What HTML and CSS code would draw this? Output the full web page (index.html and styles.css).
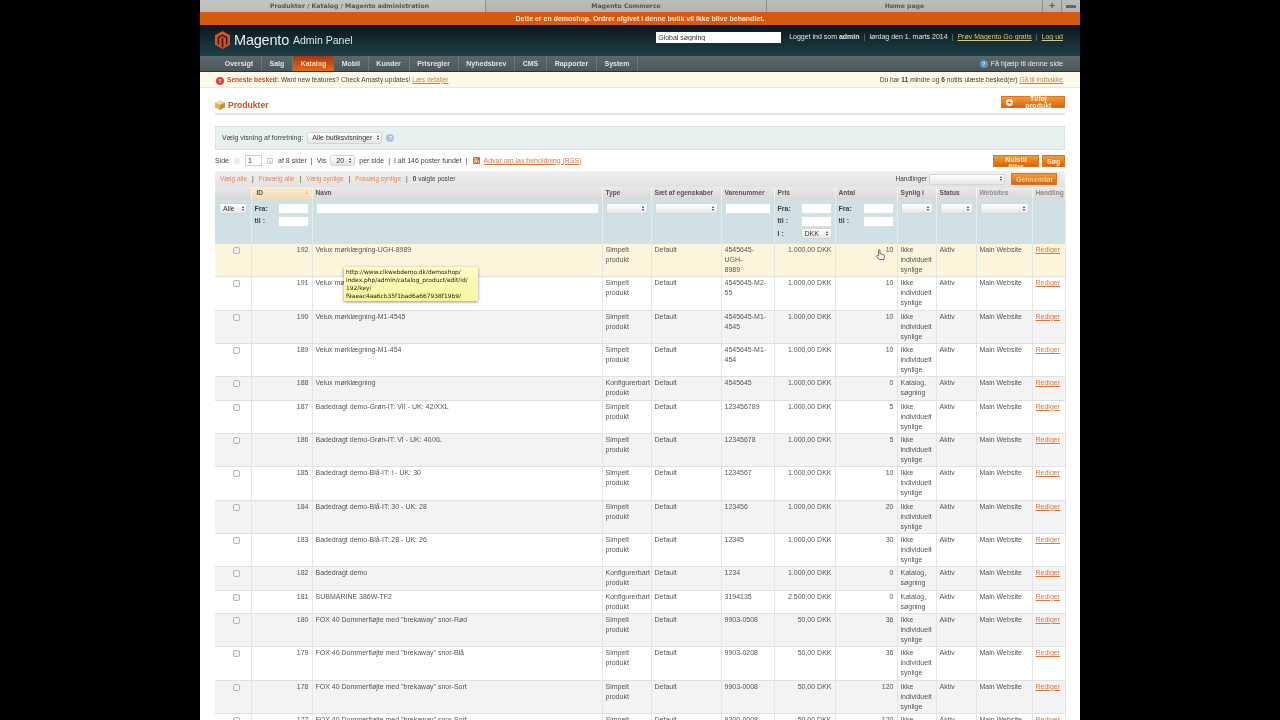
FILE: index.html
```html
<!DOCTYPE html>
<html lang="da">
<head>
  <meta charset="UTF-8" />
  <title>Produkter / Katalog / Magento administration</title>
  <link rel="stylesheet" href="styles.css">
</head>
<body>
<div class="page">
  <!-- Browser tabs -->
  <div class="tabs">
    <div class="tab tab-active tab-1">Produkter / Katalog / Magento administration</div>
    <div class="tab tab-2">Magento Commerce</div>
    <div class="tab tab-3">Home page</div>
    <div class="tab tab-plus">+</div>
    <div class="tab tab-list"><span class="tab-bars"></span></div>
  </div>

  <div class="demo-notice">Dette er en demoshop. Ordrer afgivet i denne butik vil ikke blive behandlet.</div>

  <header class="header">
    <div class="logo">
      <svg class="logo-icon" width="15" height="18" viewBox="0 0 15 18">
        <polygon points="7.5,0 15,4.3 15,13.7 7.5,18 0,13.7 0,4.3" fill="#d8531f"/>
        <polygon points="7.5,3.2 12.4,6 12.4,13 10.8,13.9 10.8,7 7.5,5.1 4.2,7 4.2,13.9 2.6,13 2.6,6" fill="#3a1a12"/>
        <polygon points="6.7,7 8.3,7 8.3,16 7.5,16.4 6.7,16" fill="#3a1a12"/>
      </svg>
      <span class="logo-name">Magento</span><span class="logo-sub">Admin Panel</span>
    </div>
    <div class="header-right">
      <input class="global-search" type="text" value="Global søgning">
      <div class="user-info">Logget ind som <b>admin</b><i>|</i>lørdag den 1. marts 2014<i>|</i><a class="go-link">Prøv Magento Go gratis</a><i>|</i><a class="go-link">Log ud</a></div>
    </div>
  </header>

  <nav class="nav">
    <ul class="nav-items">
      <li>Oversigt</li>
      <li>Salg</li>
      <li class="active">Katalog</li>
      <li>Mobil</li>
      <li>Kunder</li>
      <li>Prisregler</li>
      <li>Nyhedsbrev</li>
      <li>CMS</li>
      <li>Rapporter</li>
      <li>System</li>
    </ul>
    <div class="nav-help"><span class="help-dot">?</span>Få hjælp til denne side</div>
  </nav>

  <div class="notification">
    <div><span class="warn-dot">!</span><b class="warn-label">Seneste besked:</b> Want new features? Check Amasty updates! <a>Læs detaljer</a></div>
    <div>Du har <b>11</b> mindre og <b>6</b> notits ulæste besked(er) <a>Gå til indbakke</a></div>
  </div>

  <div class="content">
    <div class="content-head">
      <h3>
        <svg width="10" height="10" viewBox="0 0 10 10">
          <polygon points="5,0 10,2.4 5,4.8 0,2.4" fill="#f5dc9a"/>
          <polygon points="0,2.4 5,4.8 5,10 0,7.6" fill="#e3b04e"/>
          <polygon points="10,2.4 5,4.8 5,10 10,7.6" fill="#c98f35"/>
        </svg>
        Produkter
      </h3>
      <button class="btn btn-add"><span class="plus-dot">+</span>Tilføj produkt</button>
    </div>

    <div class="store-switcher">
      <span>Vælg visning af forretning:</span>
      <span class="sel sel-store">Alle butiksvisninger<i class="arrows"></i></span>
      <span class="store-help">?</span>
    </div>

    <div class="pager">
      <div class="pager-left">
        Side
        <span class="page-arrow page-arrow-off"></span>
        <input class="page-input" type="text" value="1">
        <span class="page-arrow">›</span>
        af 8 sider <i>|</i> Vis
        <span class="sel sel-size">20<i class="arrows"></i></span>
        per side <i>|</i> I alt 146 poster fundet <i>|</i>
        <svg class="rss" width="7" height="7" viewBox="0 0 7 7">
          <rect width="7" height="7" rx="1" fill="#e0622a"/>
          <circle cx="2" cy="5" r=".8" fill="#fff"/>
          <path d="M1.3 3a2.7 2.7 0 0 1 2.7 2.7M1.3 1.4a4.3 4.3 0 0 1 4.3 4.3" fill="none" stroke="#fff" stroke-width=".8"/>
        </svg>
        <a>Advar om lav beholdning (RSS)</a>
      </div>
      <div class="pager-right">
        <button class="btn">Nulstil filter</button>
        <button class="btn">Søg</button>
      </div>
    </div>

    <div class="massaction">
      <div class="mass-links">
        <a>Vælg alle</a><i>|</i><a>Fravælg alle</a><i>|</i><a>Vælg synlige</a><i>|</i><a>Fravælg synlige</a><i>|</i><b>0</b>&nbsp;valgte poster
      </div>
      <div class="mass-actions">
        Handlinger
        <span class="sel sel-action"><i class="arrows"></i></span>
        <button class="btn btn-run">Gennemfør</button>
      </div>
    </div>

    <table class="grid">
      <colgroup>
        <col class="c-check"><col class="c-id"><col class="c-name"><col class="c-type"><col class="c-set"><col class="c-sku"><col class="c-price"><col class="c-qty"><col class="c-vis"><col class="c-status"><col class="c-web"><col class="c-act">
      </colgroup>
      <thead>
        <tr class="headings">
          <th></th>
          <th class="sorted">ID<span class="sort-arrow">↓</span></th>
          <th>Navn</th>
          <th>Type</th>
          <th>Sæt af egenskaber</th>
          <th>Varenummer</th>
          <th>Pris</th>
          <th>Antal</th>
          <th>Synlig i</th>
          <th>Status</th>
          <th class="muted">Websites</th>
          <th class="muted">Handling</th>
        </tr>
        <tr class="filters">
          <td><span class="sel sel-all">Alle<i class="arrows"></i></span></td>
          <td>
            <div class="range">
              <div class="range-line"><b>Fra:</b><input type="text"></div>
              <div class="range-line"><b>til :</b><input type="text"></div>
            </div>
          </td>
          <td><input class="wide" type="text"></td>
          <td><span class="sel sel-fill"><i class="arrows"></i></span></td>
          <td><span class="sel sel-fill"><i class="arrows"></i></span></td>
          <td><input class="wide" type="text"></td>
          <td>
            <div class="range">
              <div class="range-line"><b>Fra:</b><input type="text"></div>
              <div class="range-line"><b>til :</b><input type="text"></div>
              <div class="range-line"><b>I :</b><span class="sel sel-cur">DKK<i class="arrows"></i></span></div>
            </div>
          </td>
          <td>
            <div class="range">
              <div class="range-line"><b>Fra:</b><input type="text"></div>
              <div class="range-line"><b>til :</b><input type="text"></div>
            </div>
          </td>
          <td><span class="sel sel-fill"><i class="arrows"></i></span></td>
          <td><span class="sel sel-fill"><i class="arrows"></i></span></td>
          <td><span class="sel sel-fill"><i class="arrows"></i></span></td>
          <td></td>
        </tr>
      </thead>
      <tbody>
        <tr class="hover">
          <td class="check"><input type="checkbox"></td><td class="num">192</td><td>Velux mørklægning-UGH-8989</td><td>Simpelt<br>produkt</td><td>Default</td><td>4545645-UGH-<br>8989</td><td class="num">1.000,00 DKK</td><td class="num">10</td><td>Ikke<br>individuelt<br>synlige</td><td>Aktiv</td><td>Main Website</td><td><a>Rediger</a></td>
        </tr>
        <tr>
          <td class="check"><input type="checkbox"></td><td class="num">191</td><td>Velux mørklægning-M2-55</td><td>Simpelt<br>produkt</td><td>Default</td><td>4545645-M2-<br>55</td><td class="num">1.000,00 DKK</td><td class="num">10</td><td>Ikke<br>individuelt<br>synlige</td><td>Aktiv</td><td>Main Website</td><td><a>Rediger</a></td>
        </tr>
        <tr class="even">
          <td class="check"><input type="checkbox"></td><td class="num">190</td><td>Velux mørklægning-M1-4545</td><td>Simpelt<br>produkt</td><td>Default</td><td>4545645-M1-<br>4545</td><td class="num">1.000,00 DKK</td><td class="num">10</td><td>Ikke<br>individuelt<br>synlige</td><td>Aktiv</td><td>Main Website</td><td><a>Rediger</a></td>
        </tr>
        <tr>
          <td class="check"><input type="checkbox"></td><td class="num">189</td><td>Velux mørklægning-M1-454</td><td>Simpelt<br>produkt</td><td>Default</td><td>4545645-M1-<br>454</td><td class="num">1.000,00 DKK</td><td class="num">10</td><td>Ikke<br>individuelt<br>synlige</td><td>Aktiv</td><td>Main Website</td><td><a>Rediger</a></td>
        </tr>
        <tr class="even">
          <td class="check"><input type="checkbox"></td><td class="num">188</td><td>Velux mørklægning</td><td>Konfigurerbart<br>produkt</td><td>Default</td><td>4545645</td><td class="num">1.000,00 DKK</td><td class="num">0</td><td>Katalog,<br>søgning</td><td>Aktiv</td><td>Main Website</td><td><a>Rediger</a></td>
        </tr>
        <tr>
          <td class="check"><input type="checkbox"></td><td class="num">187</td><td>Badedragt demo-Grøn-IT: VII - UK: 42/XXL</td><td>Simpelt<br>produkt</td><td>Default</td><td>123456789</td><td class="num">1.000,00 DKK</td><td class="num">5</td><td>Ikke<br>individuelt<br>synlige</td><td>Aktiv</td><td>Main Website</td><td><a>Rediger</a></td>
        </tr>
        <tr class="even">
          <td class="check"><input type="checkbox"></td><td class="num">186</td><td>Badedragt demo-Grøn-IT: VI - UK: 40/XL</td><td>Simpelt<br>produkt</td><td>Default</td><td>12345678</td><td class="num">1.000,00 DKK</td><td class="num">5</td><td>Ikke<br>individuelt<br>synlige</td><td>Aktiv</td><td>Main Website</td><td><a>Rediger</a></td>
        </tr>
        <tr>
          <td class="check"><input type="checkbox"></td><td class="num">185</td><td>Badedragt demo-Blå-IT: I - UK: 30</td><td>Simpelt<br>produkt</td><td>Default</td><td>1234567</td><td class="num">1.000,00 DKK</td><td class="num">10</td><td>Ikke<br>individuelt<br>synlige</td><td>Aktiv</td><td>Main Website</td><td><a>Rediger</a></td>
        </tr>
        <tr class="even">
          <td class="check"><input type="checkbox"></td><td class="num">184</td><td>Badedragt demo-Blå-IT: 30 - UK: 28</td><td>Simpelt<br>produkt</td><td>Default</td><td>123456</td><td class="num">1.000,00 DKK</td><td class="num">20</td><td>Ikke<br>individuelt<br>synlige</td><td>Aktiv</td><td>Main Website</td><td><a>Rediger</a></td>
        </tr>
        <tr>
          <td class="check"><input type="checkbox"></td><td class="num">183</td><td>Badedragt demo-Blå-IT: 28 - UK: 26</td><td>Simpelt<br>produkt</td><td>Default</td><td>12345</td><td class="num">1.000,00 DKK</td><td class="num">30</td><td>Ikke<br>individuelt<br>synlige</td><td>Aktiv</td><td>Main Website</td><td><a>Rediger</a></td>
        </tr>
        <tr class="even">
          <td class="check"><input type="checkbox"></td><td class="num">182</td><td>Badedragt demo</td><td>Konfigurerbart<br>produkt</td><td>Default</td><td>1234</td><td class="num">1.000,00 DKK</td><td class="num">0</td><td>Katalog,<br>søgning</td><td>Aktiv</td><td>Main Website</td><td><a>Rediger</a></td>
        </tr>
        <tr>
          <td class="check"><input type="checkbox"></td><td class="num">181</td><td>SUBMARINE 386W-TF2</td><td>Konfigurerbart<br>produkt</td><td>Default</td><td>3194135</td><td class="num">2.500,00 DKK</td><td class="num">0</td><td>Katalog,<br>søgning</td><td>Aktiv</td><td>Main Website</td><td><a>Rediger</a></td>
        </tr>
        <tr class="even">
          <td class="check"><input type="checkbox"></td><td class="num">180</td><td>FOX 40 Dommerfløjte med "brekaway" snor-Rød</td><td>Simpelt<br>produkt</td><td>Default</td><td>9903-0508</td><td class="num">50,00 DKK</td><td class="num">36</td><td>Ikke<br>individuelt<br>synlige</td><td>Aktiv</td><td>Main Website</td><td><a>Rediger</a></td>
        </tr>
        <tr>
          <td class="check"><input type="checkbox"></td><td class="num">179</td><td>FOX 40 Dommerfløjte med "brekaway" snor-Blå</td><td>Simpelt<br>produkt</td><td>Default</td><td>9903-0208</td><td class="num">50,00 DKK</td><td class="num">36</td><td>Ikke<br>individuelt<br>synlige</td><td>Aktiv</td><td>Main Website</td><td><a>Rediger</a></td>
        </tr>
        <tr class="even">
          <td class="check"><input type="checkbox"></td><td class="num">178</td><td>FOX 40 Dommerfløjte med "brekaway" snor-Sort</td><td>Simpelt<br>produkt</td><td>Default</td><td>9903-0008</td><td class="num">50,00 DKK</td><td class="num">120</td><td>Ikke<br>individuelt<br>synlige</td><td>Aktiv</td><td>Main Website</td><td><a>Rediger</a></td>
        </tr>
        <tr>
          <td class="check"><input type="checkbox"></td><td class="num">177</td><td>FOX 40 Dommerfløjte med "brekaway" snor-Sort</td><td>Simpelt<br>produkt</td><td>Default</td><td>9300-0008</td><td class="num">50,00 DKK</td><td class="num">120</td><td>Ikke<br>individuelt<br>synlige</td><td>Aktiv</td><td>Main Website</td><td><a>Rediger</a></td>
        </tr>
      </tbody>
    </table>
  </div>

  <!-- Link tooltip and mouse pointer lie over the table -->
  <div class="link-tip">http://www.clkwebdemo.dk/demoshop/<br>index.php/admin/catalog_product/edit/id/<br>192/key/<br>f9aeac4aa6cb35f1bad6a667938f19b9/</div>
  <svg class="pointer" width="9" height="12" viewBox="0 0 9 12">
    <path d="M2.6 6.6V1.3c0-.9 1.4-.9 1.4 0v3.4l3.2.8c.9.2 1.3.7 1.2 1.6L8 10.6H3.2L.8 7.6c-.6-.8.4-1.6 1.1-1z" fill="#f4f4f4" stroke="#333" stroke-width=".7" stroke-linejoin="round"/>
  </svg>
</div>
</body>
</html>
```

FILE: styles.css
```css
* {
  box-sizing: border-box;
}

html, body {
  margin: 0;
  padding: 0;
  height: 720px;
  overflow: hidden;
  background-color: #000;
}

body {
  display: flex;
  justify-content: center;
  font-family: "Liberation Sans", Arial, sans-serif;
  font-size: 7px;
  line-height: 10px;
  color: #444;
}

a {
  color: #d9793f;
  text-decoration: underline;
}

.page {
  position: relative;
  width: 880px;
  height: 720px;
  overflow: hidden;
  background-color: #fff;
  filter: blur(0.35px);
}

/* browser tabs */
.tabs {
  display: flex;
  height: 12px;
  background-color: #b9b9b9;
  font-family: "DejaVu Sans", sans-serif;
  font-size: 6.2px;
  font-weight: bold;
  color: #555;
}

.tab {
  display: flex;
  align-items: center;
  justify-content: center;
  border-right: 1px solid #8d8d8d;
  background: linear-gradient(#bdbdbd, #b2b2b2);
}

.tab-active {
  background: linear-gradient(#c6c6c6, #bcbcbc);
  justify-content: flex-start;
  padding-left: 70px;
}

.tab-1 { width: 286px; }
.tab-2 { width: 281px; }
.tab-3 { width: 276px; }
.tab-plus { width: 19px; font-size: 8px; }
.tab-list { width: 18px; border-right: 0; }

.tab-bars {
  width: 10px;
  height: 3px;
  background-color: #666;
}

.demo-notice {
  height: 13px;
  line-height: 13px;
  background-color: #d65a10;
  color: #fbe3cf;
  font-weight: bold;
  text-align: center;
}

/* header */
.header {
  display: flex;
  justify-content: space-between;
  height: 31px;
  padding: 7px 17px 0 15px;
  background: linear-gradient(#0b171c, #1e3f49);
}

.logo {
  display: flex;
  align-items: center;
  height: 16px;
  color: #fff;
}

.logo-icon {
  margin-right: 4px;
}

.logo-name {
  font-size: 14.5px;
  letter-spacing: -0.2px;
  color: #e8eef0;
}

.logo-sub {
  margin-left: 4px;
  font-family: "Liberation Sans Narrow", "Liberation Sans", sans-serif;
  font-size: 10.5px;
  color: #dfe6e8;
}

.header-right {
  display: flex;
  align-items: flex-start;
  color: #dfe5e6;
}

.global-search {
  width: 125px;
  height: 11px;
  margin: 0 8px 0 0;
  padding: 0 2px;
  border: 0;
  background-color: #fff;
  font: 7px "Liberation Sans", sans-serif;
  color: #333;
}

.user-info {
  line-height: 10px;
}

.user-info i {
  margin: 0 4px;
  font-style: normal;
  color: #7f9298;
}

.user-info a.go-link {
  color: #d8c684;
}

/* nav */
.nav {
  display: flex;
  justify-content: space-between;
  align-items: stretch;
  height: 16px;
  padding: 0 17px 0 17px;
  background: linear-gradient(#5c676c, #4d585d);
  border-bottom: 1px solid #2b3437;
  color: #dfe4e6;
  font-weight: bold;
}

.nav-items {
  display: flex;
  list-style: none;
  margin: 0;
  padding: 0;
}

.nav-items li {
  padding: 0 7.7px;
  line-height: 15px;
  border-right: 1px solid #6c777c;
}

.nav-items li.active {
  background: linear-gradient(#a33a14, #e8690f);
  color: #fbd9b5;
  border-right: 0;
}

.nav-help {
  display: flex;
  align-items: center;
  font-size: 7.2px;
  font-weight: normal;
  color: #e6ebed;
}

.help-dot {
  width: 8px;
  height: 8px;
  margin-right: 3px;
  border-radius: 50%;
  background-color: #5f94bf;
  color: #fff;
  font-size: 6px;
  line-height: 8px;
  text-align: center;
}

/* message bar */
.notification {
  display: flex;
  justify-content: space-between;
  align-items: center;
  height: 16px;
  padding: 0 17px 0 16px;
  background-color: #fdf9e8;
  border-bottom: 1px solid #eee8cf;
  font-size: 6.6px;
  color: #444;
}

.warn-dot {
  display: inline-block;
  width: 8px;
  height: 8px;
  margin-right: 3px;
  border-radius: 50%;
  background-color: #d6473a;
  color: #fff;
  font-size: 6px;
  font-weight: bold;
  line-height: 8px;
  text-align: center;
  vertical-align: -1px;
}

.warn-label {
  color: #c9492d;
}

/* content */
.content {
  padding: 0 15px;
}

.content-head {
  display: flex;
  justify-content: space-between;
  align-items: center;
  height: 27px;
  padding-top: 8px;
  border-bottom: 2px solid #e2e2e2;
}

.content-head h3 {
  display: flex;
  align-items: center;
  gap: 3px;
  margin: 0 0 0 0;
  padding-top: 1px;
  font-size: 8.6px;
  color: #c6502a;
}

.btn {
  height: 12px;
  padding: 0 4px;
  border: 1px solid #d9751b;
  background: linear-gradient(#f29c36, #d9660f);
  color: #fdeccd;
  font: bold 7px "Liberation Sans", sans-serif;
}

.btn-add {
  display: flex;
  align-items: center;
  width: 64px;
  margin-top: -5px;
  padding-left: 4px;
}

.plus-dot {
  width: 7px;
  height: 7px;
  margin-right: 4px;
  border-radius: 50%;
  background-color: #fdf0dc;
  color: #d9660f;
  line-height: 7px;
  text-align: center;
  font-size: 7px;
}

.store-switcher {
  display: flex;
  align-items: center;
  gap: 3px;
  height: 24px;
  margin-top: 11px;
  padding-left: 6px;
  background-color: #e7f1ef;
  border: 1px solid #dbe7e4;
  color: #444;
}

.store-help {
  width: 8px;
  height: 8px;
  margin-left: 1px;
  border-radius: 50%;
  background-color: #a9c4d6;
  color: #fff;
  font-size: 6px;
  line-height: 8px;
  text-align: center;
}

/* fake selects */
.sel {
  position: relative;
  display: inline-block;
  height: 10px;
  padding: 0 9px 0 3px;
  border: 1px solid #d5d5d5;
  border-radius: 2px;
  background: linear-gradient(#fff, #e6e6e6);
  color: #333;
  line-height: 8px;
  vertical-align: middle;
}

.arrows {
  position: absolute;
  top: 1.5px;
  right: 3px;
  width: 0;
  height: 5px;
}

.arrows::before,
.arrows::after {
  content: "";
  position: absolute;
  left: -1.5px;
  border-left: 1.5px solid transparent;
  border-right: 1.5px solid transparent;
}

.arrows::before {
  top: 0;
  border-bottom: 2px solid #333;
}

.arrows::after {
  bottom: 0;
  border-top: 2px solid #333;
}

.sel-store { width: 75px; height: 12px; line-height: 10px; padding-left: 4px; margin-left: 1px; }
.sel-size { width: 25px; height: 11px; line-height: 9px; padding-left: 4px; text-align: center; margin: 0 1px; }
.sel-action { width: 76px; height: 11px; }
.sel-all { width: 28px; display: block; height: 11px; line-height: 9px; margin-left: 1px; padding-left: 3px; }
.sel-fill { display: block; width: 100%; height: 11px; }
.sel-cur { width: 31px; height: 11px; line-height: 9px; }

/* pager */
.pager {
  display: flex;
  justify-content: space-between;
  align-items: flex-start;
  height: 21px;
  padding-top: 5px;
}

.pager-left {
  display: flex;
  align-items: center;
  gap: 3px;
  height: 11px;
  white-space: nowrap;
}

.pager-left i {
  font-style: normal;
  margin: 0 1px;
}

.pager-left a {
  color: #d9793f;
}

.page-arrow {
  width: 6px;
  height: 6px;
  margin: 0 2px;
  border: 1px solid #d0d0d0;
  font-size: 5px;
  line-height: 4px;
  text-align: center;
}

.page-arrow-off {
  background-color: #eee;
  border-color: #eee;
}

.page-input {
  width: 17px;
  height: 11px;
  margin: 0;
  padding: 0 2px;
  border: 1px solid #d0d0d0;
  font: 7px "Liberation Sans", sans-serif;
  color: #333;
}

.rss {
  margin: 0 1px;
}

.pager-right {
  display: flex;
  gap: 3px;
}

.pager-right .btn:first-child { width: 46px; }
.pager-right .btn:last-child { width: 23px; }

/* mass actions */
.massaction {
  display: flex;
  justify-content: space-between;
  align-items: center;
  height: 16px;
  padding: 0 8px 0 5px;
  background: linear-gradient(#f0f0f0, #e2e2e2);
  font-size: 6.5px;
}

.mass-links a {
  color: #dd8a5c;
  text-decoration: none;
}

.mass-links i {
  margin: 0 5px;
  font-style: normal;
}

.mass-actions {
  display: flex;
  align-items: center;
  gap: 2px;
}

.btn-run {
  width: 46px;
  margin-left: 4px;
  color: #f7c98e;
}

/* grid */
.grid {
  width: 850px;
  table-layout: fixed;
  border-collapse: collapse;
  border-spacing: 0;
}

.c-check { width: 36px; }
.c-id { width: 61px; }
.c-name { width: 290px; }
.c-type { width: 49px; }
.c-set { width: 70px; }
.c-sku { width: 53px; }
.c-price { width: 61px; }
.c-qty { width: 62px; }
.c-vis { width: 39px; }
.c-status { width: 40px; }
.c-web { width: 56px; }
.c-act { width: 33px; }

.headings th {
  height: 12px;
  padding: 0 3px;
  background: linear-gradient(#e9e9e9, #d8d8d8);
  border-right: 1px solid #f4f4f4;
  text-align: left;
  font-size: 6.6px;
  font-weight: bold;
  line-height: 10px;
  color: #555;
}

.headings th.sorted {
  position: relative;
  padding-left: 5px;
  background: linear-gradient(#fdeccf, #f6dcb4);
}

.sort-arrow {
  position: absolute;
  right: 3px;
  top: 0;
  color: #e0752d;
}

.headings th.muted {
  color: #8a8f90;
}

.filters td {
  height: 45px;
  padding: 4px 3px 0;
  vertical-align: top;
  background-color: #cfe1e5;
  border-right: 1px solid #e3edef;
}

.filters input {
  height: 11px;
  margin: 0;
  padding: 0;
  border: 1px solid #d8e0e2;
  background-color: #fff;
}

.filters input.wide {
  display: block;
  width: 100%;
}

.range {
  display: flex;
  flex-direction: column;
  gap: 1.6px;
}

.range-line {
  display: flex;
  justify-content: space-between;
  align-items: center;
  height: 11px;
}

.range-line b {
  color: #444;
}

.range-line input {
  width: 31px;
}

.grid tbody td {
  padding: 1px 3px 1.33px;
  vertical-align: top;
  border-right: 1px solid #e3e6e8;
  border-bottom: 1px solid #dfe2e4;
  line-height: 10px;
  color: #555;
}

.grid tbody tr.even td {
  background-color: #f3f3f3;
}

.grid tbody tr.hover td {
  background-color: #fcf5dc;
}

.grid td.num {
  text-align: right;
}

.grid td.check {
  text-align: center;
}

.grid input[type="checkbox"] {
  appearance: none;
  display: block;
  width: 7px;
  height: 7px;
  margin: 2px 0 0 14.5px;
  border: 1px solid #b5b5b5;
  border-radius: 2px;
  background-color: #f7f7f7;
}

/* overlays */
.link-tip {
  position: absolute;
  left: 144px;
  top: 267px;
  width: 134px;
  height: 34px;
  padding: 1px 2px;
  background: linear-gradient(#fdfcc4, #f9f69c);
  box-shadow: 0 1px 3px rgba(0,0,0,0.45);
  font-family: "DejaVu Sans", sans-serif;
  font-size: 5.9px;
  line-height: 8px;
  white-space: nowrap;
  color: #222;
}

.pointer {
  position: absolute;
  left: 676px;
  top: 249px;
}
```
